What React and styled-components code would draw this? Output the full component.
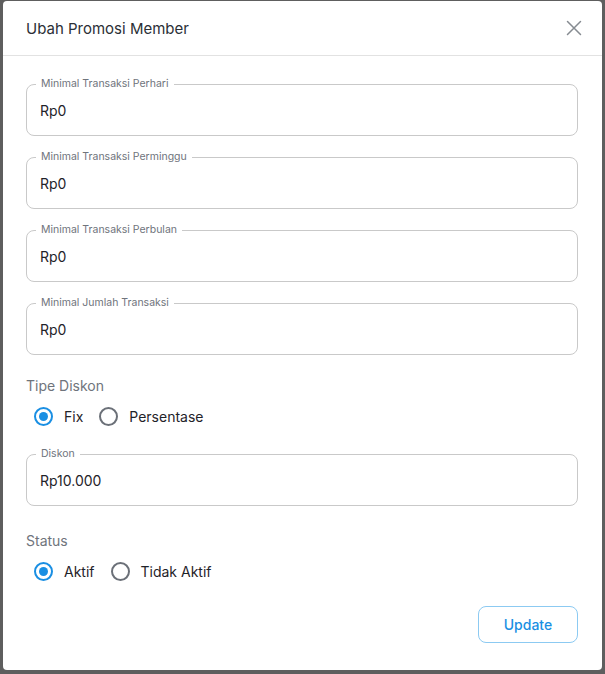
import React, { useState } from "react"
import styled, { createGlobalStyle } from "styled-components"

const Global = createGlobalStyle`
  html, body { margin: 0; padding: 0; }
  body {
    background: #5e5e5e;
    font-family: "Inter", "Noto Sans", sans-serif;
  }
`

const Backdrop = styled.div`
  padding: 1px 3px 4px 3px;
  height: 674px;
  box-sizing: border-box;
`

const Modal = styled.div`
  background: #fff;
  border-radius: 4px;
  height: 100%;
  display: flex;
  flex-direction: column;
`

const Header = styled.div`
  flex-shrink: 0;
  height: 54px;
  border-bottom: 1px solid #e2e2e2;
  display: flex;
  align-items: center;
  justify-content: space-between;
  padding: 0 18px 0 23px;
`

const Title = styled.h2`
  margin: 0;
  font-size: 15px;
  font-weight: 400;
  color: #2b2f36;
`

const CloseBtn = styled.button`
  border: 0;
  background: none;
  padding: 0;
  width: 20px;
  height: 20px;
  display: grid;
  place-items: center;
  cursor: pointer;
`

const Body = styled.div`
  padding: 28px 24px 0 23px;
  display: flex;
  flex-direction: column;
`

const Field = styled.div`
  position: relative;
  flex-shrink: 0;
  height: 52px;
  box-sizing: border-box;
  border: 1px solid #c9c9c9;
  border-radius: 8px;
  display: flex;
  align-items: center;
  padding-left: 13px;
  margin-bottom: ${p => p.$gap ?? 21}px;
`

const FieldLabel = styled.span`
  position: absolute;
  top: -8px;
  left: 9px;
  padding: 0 5px;
  background: #fff;
  font-size: 10.5px;
  line-height: 14px;
  color: #6f747c;
`

const FieldValue = styled.span`
  font-size: 14px;
  color: #1f2329;
`

const SectionLabel = styled.div`
  font-size: 14px;
  color: #6f747c;
  margin-top: ${p => p.$top || 0}px;
  line-height: 20px;
`

const RadioRow = styled.div`
  display: flex;
  align-items: center;
  gap: 16px;
  padding-left: 8px;
  margin-top: 10px;
  margin-bottom: ${p => p.$bottom || 0}px;
`

const RadioOption = styled.label`
  display: flex;
  align-items: center;
  gap: 11px;
  font-size: 14px;
  color: #1f2329;
  cursor: pointer;
  height: 20px;
`

const Circle = styled.span`
  width: 19px;
  height: 19px;
  box-sizing: border-box;
  border-radius: 50%;
  border: 2px solid ${p => (p.$on ? "#1a8fe3" : "#6b7078")};
  display: grid;
  place-items: center;
  &::after {
    content: "";
    width: 9px;
    height: 9px;
    border-radius: 50%;
    background: #1a8fe3;
    display: ${p => (p.$on ? "block" : "none")};
  }
`

const Footer = styled.div`
  display: flex;
  justify-content: flex-end;
  padding: 0 24px 0 0;
  margin-top: 25px;
`

const UpdateBtn = styled.button`
  width: 100px;
  height: 37px;
  border: 1px solid #8ccaf2;
  border-radius: 8px;
  background: #fff;
  color: #1a8fe3;
  font-family: inherit;
  font-size: 14px;
  font-weight: 500;
  cursor: pointer;
`

const Radio = ({ on, label, onClick }) => (
  <RadioOption onClick={onClick}>
    <Circle $on={on} />
    {label}
  </RadioOption>
)

const fields = [
  "Minimal Transaksi Perhari",
  "Minimal Transaksi Perminggu",
  "Minimal Transaksi Perbulan",
  "Minimal Jumlah Transaksi",
]

export default function App() {
  const [tipe, setTipe] = useState("fix")
  const [status, setStatus] = useState("aktif")

  return (
    <>
      <Global />
      <Backdrop>
        <Modal>
          <Header>
            <Title>Ubah Promosi Member</Title>
            <CloseBtn aria-label="close">
              <svg width="16" height="16" viewBox="0 0 16 16">
                <path d="M1.5 1.5 L14.5 14.5 M14.5 1.5 L1.5 14.5" stroke="#868b91" strokeWidth="1.5" strokeLinecap="round" />
              </svg>
            </CloseBtn>
          </Header>
          <Body>
            {fields.map((f, i) => (
              <Field key={f} $gap={i === 3 ? 0 : 21}>
                <FieldLabel>{f}</FieldLabel>
                <FieldValue>Rp0</FieldValue>
              </Field>
            ))}

            <SectionLabel $top={21}>Tipe Diskon</SectionLabel>
            <RadioRow $bottom={28}>
              <Radio on={tipe === "fix"} label="Fix" onClick={() => setTipe("fix")} />
              <Radio on={tipe === "persen"} label="Persentase" onClick={() => setTipe("persen")} />
            </RadioRow>

            <Field $gap={0}>
              <FieldLabel>Diskon</FieldLabel>
              <FieldValue>Rp10.000</FieldValue>
            </Field>

            <SectionLabel $top={25}>Status</SectionLabel>
            <RadioRow>
              <Radio on={status === "aktif"} label="Aktif" onClick={() => setStatus("aktif")} />
              <Radio on={status === "tidak"} label="Tidak Aktif" onClick={() => setStatus("tidak")} />
            </RadioRow>
          </Body>
          <Footer>
            <UpdateBtn>Update</UpdateBtn>
          </Footer>
        </Modal>
      </Backdrop>
    </>
  )
}
